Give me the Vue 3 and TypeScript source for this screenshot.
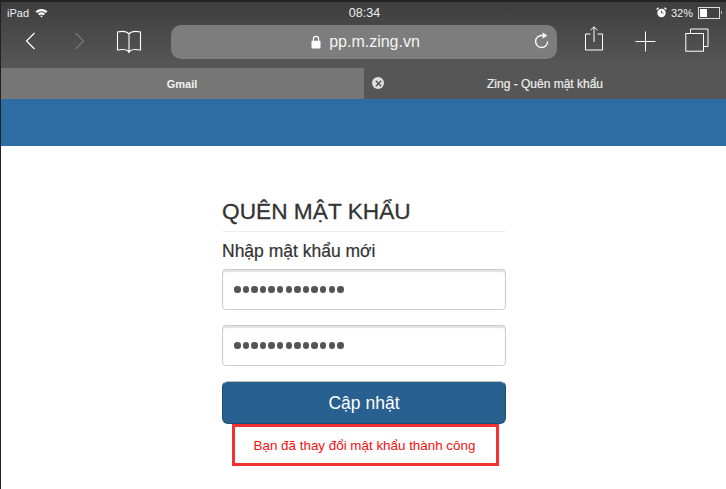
<template>
  <div class="screen">
    <header class="chrome">
      <div class="status">
        <div class="status-left">
          <span>iPad</span>
          <svg class="wifi" width="13" height="10" viewBox="0 0 13 10">
            <path d="M0.5 3.2 Q6.5 -1.4 12.5 3.2 L11 4.9 Q6.5 1.5 2 4.9 Z" fill="#fff" />
            <path d="M3 5.7 Q6.5 3 10 5.7 L8.6 7.2 Q6.5 5.7 4.4 7.2 Z" fill="#fff" />
            <path d="M5.2 8 Q6.5 7 7.8 8 L6.5 9.5 Z" fill="#fff" />
          </svg>
        </div>
        <span class="clock">08:34</span>
        <div class="status-right">
          <svg width="11" height="11" viewBox="0 0 11 11">
            <circle cx="5.5" cy="6" r="4.2" fill="#fff" />
            <path d="M0.6 2.6 L2.6 0.8 M10.4 2.6 L8.4 0.8" stroke="#fff" stroke-width="1.4" />
            <path d="M5.5 3.5 V6 H7.5" stroke="#555" stroke-width="0.9" fill="none" />
          </svg>
          <span>{{ batteryLevel }}%</span>
          <div class="battery">
            <div class="battery-fill" :style="{ width: batteryLevel + '%' }"></div>
          </div>
          <span class="battery-tip"></span>
        </div>
      </div>

      <div class="toolbar">
        <svg class="ico back" width="12" height="18" viewBox="0 0 12 18">
          <path d="M10.5 1 L2.5 9 L10.5 17" fill="none" stroke="#fff" stroke-width="1.2" />
        </svg>
        <svg class="ico forward" width="12" height="18" viewBox="0 0 12 18">
          <path d="M1.5 1 L9.5 9 L1.5 17" fill="none" stroke="#777" stroke-width="1.2" />
        </svg>
        <svg class="ico book" width="26" height="24" viewBox="0 0 26 24">
          <path
            d="M13 4 C11 1.6 6 1 1.5 2 V20 C6 19.2 10.5 19.4 12 21 L13 22.5 L14 21 C15.5 19.4 20 19.2 24.5 20 V2 C20 1 15 1.6 13 4 Z M13 4 V22"
            fill="none"
            stroke="#fff"
            stroke-width="1.1"
          />
        </svg>
        <div class="address">
          <div class="url">
            <svg width="10" height="14" viewBox="0 0 10 14">
              <path d="M2.4 6 V4 a2.6 2.6 0 0 1 5.2 0 V6" fill="none" stroke="#fff" stroke-width="1.2" />
              <rect x="0.5" y="5.8" width="9" height="7.6" rx="1" fill="#fff" />
            </svg>
            <span>pp.m.zing.vn</span>
          </div>
          <svg class="reload" width="16" height="17" viewBox="0 0 16 17">
            <path d="M13.6 9.5 A6 6 0 1 1 8 3.5 H9.5" fill="none" stroke="#fff" stroke-width="1.3" />
            <path d="M8.6 0.4 L13.2 3.6 L8.6 6.8 Z" fill="#fff" />
          </svg>
        </div>
        <svg class="ico share" width="20" height="25" viewBox="0 0 20 25">
          <path d="M6.5 8 H1.5 V24 H18.5 V8 H13.5" fill="none" stroke="#fff" stroke-width="1" />
          <path d="M10 16 V1 M6.5 4.2 L10 0.8 L13.5 4.2" fill="none" stroke="#fff" stroke-width="1" />
        </svg>
        <svg class="ico plus" width="21" height="21" viewBox="0 0 21 21">
          <path d="M10.5 0.5 V20.5 M0.5 10.5 H20.5" stroke="#fff" stroke-width="1" />
        </svg>
        <svg class="ico tabs-ico" width="24" height="24" viewBox="0 0 24 24">
          <path d="M5.5 5.5 V1 H23 V18.5 H18.5" fill="none" stroke="#fff" stroke-width="1" />
          <rect x="0.8" y="5.5" width="17.7" height="17.7" fill="none" stroke="#fff" stroke-width="1" />
        </svg>
      </div>

      <div class="tabbar">
        <div class="tab inactive">Gmail</div>
        <div class="tab active">
          <span class="tab-close">
            <svg width="7" height="7" viewBox="0 0 7 7">
              <path d="M0.8 0.8 L6.2 6.2 M6.2 0.8 L0.8 6.2" stroke="#555" stroke-width="1.4" />
            </svg>
          </span>
          Zing - Quên mật khẩu
        </div>
      </div>
    </header>

    <div class="banner"></div>

    <main class="page">
      <form class="form" @submit.prevent>
        <h1>QUÊN MẬT KHẨU</h1>
        <label>Nhập mật khẩu mới</label>
        <div v-for="field in 2" :key="field" class="field">
          <i v-for="n in passwordLength" :key="n"></i>
        </div>
        <button type="submit">Cập nhật</button>
        <p class="notice">Bạn đã thay đổi mật khẩu thành công</p>
      </form>
    </main>
  </div>
</template>

<script setup lang="ts">
const batteryLevel = 32;
const passwordLength = 13;
</script>

<style>
html,
body {
  margin: 0;
  background: #fff;
}
</style>

<style scoped>
.screen {
  width: 726px;
  height: 489px;
  overflow: hidden;
  background: #fff;
  border-left: 1px solid #222;
  box-sizing: border-box;
  font-family: "Liberation Sans", Arial, sans-serif;
}

.chrome {
  background: linear-gradient(#3e3e3e, #585858 68px);
  border-top: 2px solid #222;
  color: #fff;
}

.status {
  height: 21px;
  display: grid;
  grid-template-columns: 1fr auto 1fr;
  align-items: center;
  padding: 0 4px 0 6px;
  font-size: 11px;
  color: #eee;
  background-image: radial-gradient(rgba(0, 0, 0, 0.28) 0.6px, transparent 0.7px);
  background-size: 2px 2px;
}

.status-left {
  display: flex;
  align-items: center;
  gap: 6px;
}

.clock {
  font-size: 12.5px;
}

.status-right {
  display: flex;
  align-items: center;
  justify-content: flex-end;
  gap: 4px;
}

.battery {
  width: 18px;
  height: 8px;
  border: 1px solid #ddd;
  padding: 1px;
  margin-left: 1px;
}

.battery-fill {
  height: 100%;
  background: #fff;
  min-width: 7px;
}

.battery-tip {
  width: 1px;
  height: 3px;
  background: #bbb;
  margin-left: -3px;
}

.toolbar {
  height: 45px;
  display: flex;
  align-items: flex-start;
  background-image: radial-gradient(rgba(0, 0, 0, 0.2) 0.6px, transparent 0.7px);
  background-size: 2px 2px;
}

.ico {
  flex: none;
}

.back {
  margin: 9px 0 0 23px;
}

.forward {
  margin: 9px 0 0 38px;
}

.book {
  margin: 7px 0 0 30px;
}

.address {
  width: 386px;
  height: 34px;
  margin: 2px 0 0 29px;
  border-radius: 10px;
  background: #7d7d7d;
  display: flex;
  align-items: center;
  justify-content: center;
  position: relative;
  flex: none;
}

.url {
  display: flex;
  align-items: center;
  gap: 8px;
  font-size: 16px;
  color: #f4f4f4;
  margin-left: 3px;
}

.reload {
  position: absolute;
  right: 7px;
  top: 7px;
}

.share {
  margin: 3px 0 0 27px;
}

.plus {
  margin: 8px 0 0 31px;
}

.tabs-ico {
  margin: 5px 0 0 29px;
}

.tabbar {
  height: 31px;
  display: flex;
  font-size: 11px;
}

.tab {
  display: flex;
  align-items: center;
  justify-content: center;
  position: relative;
}

.inactive {
  width: 362px;
  background-color: #767676;
  background-image: radial-gradient(rgba(0, 0, 0, 0.2) 0.6px, transparent 0.7px);
  background-size: 2px 2px;
  font-weight: 700;
  color: #f2f2f2;
}

.active {
  flex: 1;
  background: #565656;
  color: #eee;
  font-size: 12px;
  -webkit-text-stroke: 0.2px #eee;
  border-left: 1px solid #777;
}

.tab-close {
  position: absolute;
  left: 8px;
  top: 9px;
  width: 12px;
  height: 12px;
  border-radius: 50%;
  background: #e0e0e0;
  display: flex;
  align-items: center;
  justify-content: center;
}

.banner {
  height: 47px;
  background: #2e6ca4;
}

.page {
  display: flex;
  justify-content: center;
  padding-top: 50px;
}

.form {
  width: 284px;
  display: flex;
  flex-direction: column;
  margin-left: 1px;
}

h1 {
  margin: 0;
  height: 35px;
  line-height: 30px;
  font-size: 22.7px;
  font-weight: 400;
  color: #333;
  -webkit-text-stroke: 0.3px #333;
  border-bottom: 1px solid #eee;
}

label {
  font-size: 17.5px;
  line-height: 20px;
  margin-top: 9px;
  color: #333;
  -webkit-text-stroke: 0.2px #333;
}

.field {
  height: 41px;
  box-sizing: border-box;
  margin-top: 8px;
  padding-left: 11px;
  border: 1px solid #ccc;
  border-radius: 4px;
  box-shadow: inset 0 2px 1px rgba(0, 0, 0, 0.12);
  display: flex;
  align-items: center;
  gap: 2.1px;
}

.field + .field {
  margin-top: 15px;
}

.field i {
  width: 6.5px;
  height: 6.5px;
  border-radius: 50%;
  background: #555;
}

button {
  height: 43px;
  margin-top: 15px;
  padding: 2px 0 0;
  border: 1px solid #204d74;
  border-top-color: #bbb;
  border-radius: 6px;
  background: #286090;
  color: #fff;
  font-family: inherit;
  font-size: 17.5px;
}

.notice {
  box-sizing: border-box;
  width: 267px;
  height: 42px;
  margin: 0 0 0 10px;
  padding-right: 2px;
  border: 3px solid #f33131;
  display: flex;
  align-items: center;
  justify-content: center;
  font-size: 13.4px;
  color: #f50f0f;
}
</style>
